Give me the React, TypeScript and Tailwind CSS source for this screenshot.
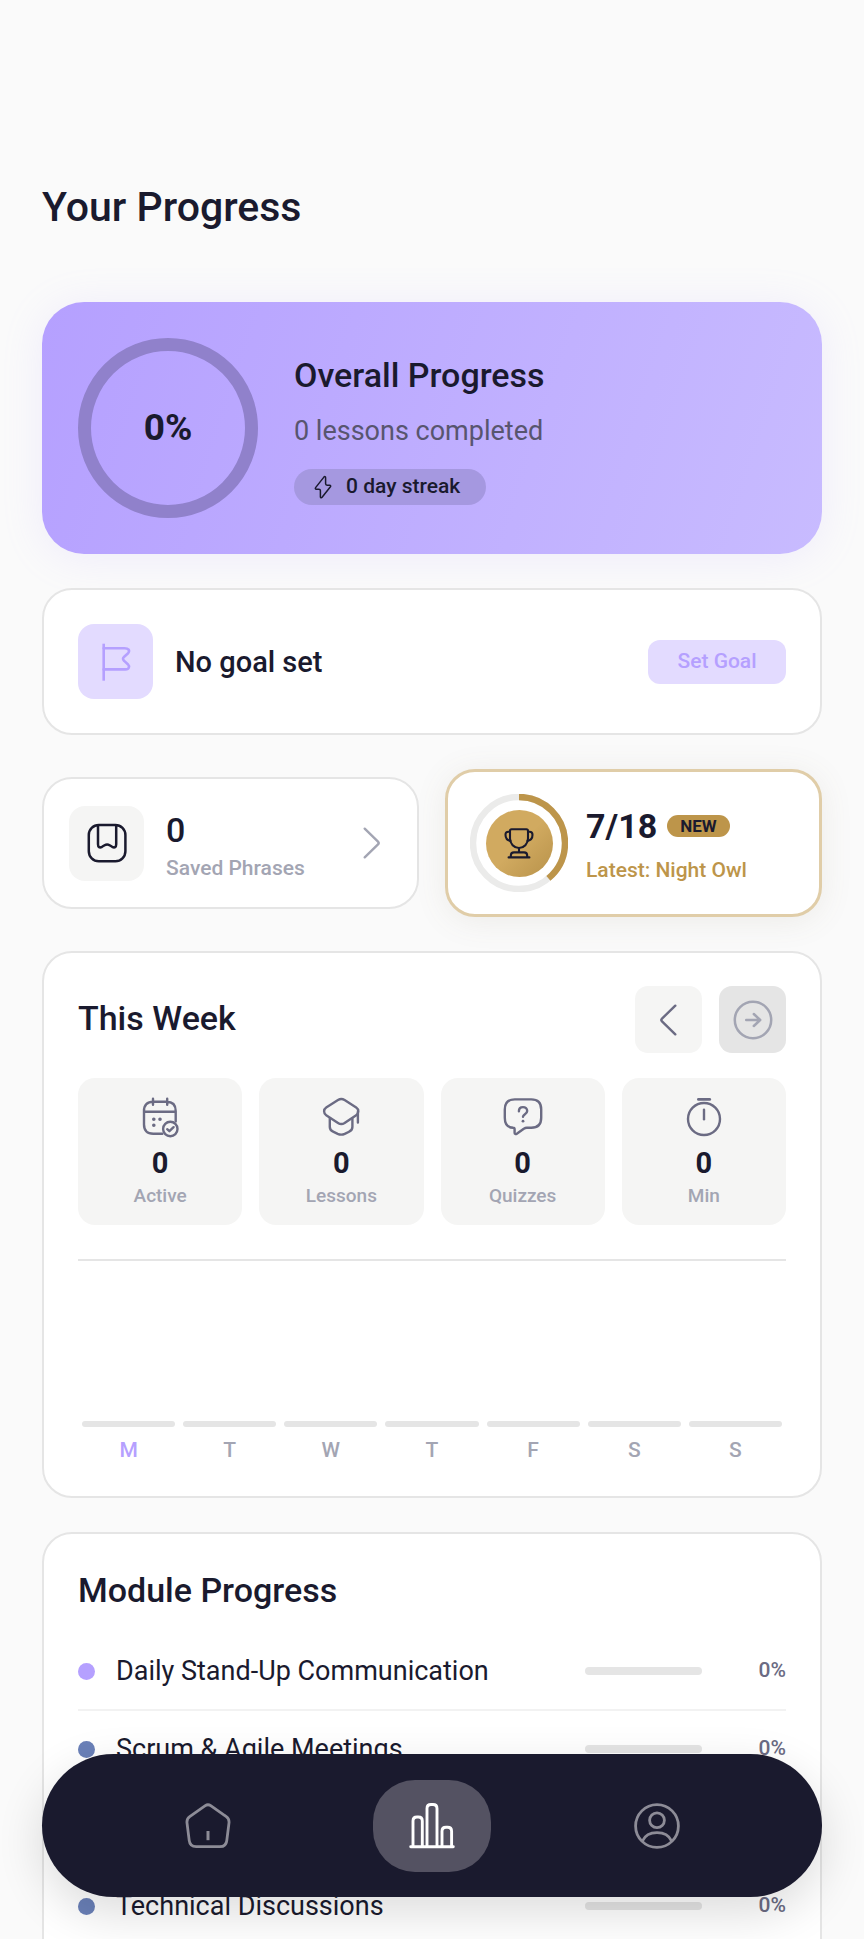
import type { ReactNode } from "react"
import { clsx } from "clsx"

type IconProps = {
  className?: string
  strokeWidth?: number
  box?: number
  children?: ReactNode
}

function Icon({ className, strokeWidth = 2.4, box = 42, children }: IconProps) {
  return (
    <svg
      viewBox={`0 0 ${box} ${box}`}
      fill="none"
      stroke="currentColor"
      strokeWidth={strokeWidth}
      strokeLinecap="round"
      strokeLinejoin="round"
      aria-hidden="true"
      className={clsx("shrink-0", className)}
    >
      {children}
    </svg>
  )
}

const BoltIcon = () => (
  <Icon box={26} strokeWidth={1.5} className="size-[26px]">
    <path d="M13.9 3.1 5.6 13.6c-.6.8-.2 1.6.7 1.6h2.6c.9 0 1.5.5 1.5 1.4v6.1c0 1.2 1 1.4 1.7.6l8.3-10.5c.6-.8.2-1.6-.7-1.6h-2.6c-.9 0-1.5-.5-1.5-1.4V3.7c0-1.2-1-1.4-1.7-.6Z" />
  </Icon>
)

const FlagIcon = () => (
  <Icon className="size-[42px]" strokeWidth={2.6}>
    <path strokeLinecap="butt" d="M8.7 2.7v37" />
    <path d="M8.7 7.2h20.8c4 0 5.8 2.2 3.6 5l-3.9 3.5c-1.6 1.4-1.6 2.8 0 4.2l3.6 3.3c2.2 2.2 1.3 5.2-2.3 5.2H8.7" />
  </Icon>
)

const BookmarkIcon = () => (
  <Icon className="size-[42px]" strokeWidth={2.5}>
    <rect x="2.8" y="3" width="36.6" height="36.2" rx="10" />
    <path d="M12 3.4v18.8c0 3 1.6 4 4 2.6l2.6-1.6c1.6-1 3.4-1 5 0l2.6 1.6c2.4 1.4 4 .4 4-2.6V3.4" />
  </Icon>
)

const ChevronIcon = ({ left }: { left?: boolean }) => (
  <Icon className="size-[42px]" strokeWidth={2.4}>
    {left ? (
      <path d="M27.3 6.7 14 19.6c-.9.9-.9 1.9 0 2.8l13.3 12.9" />
    ) : (
      <path d="m14.7 6.7 13.3 12.9c.9.9.9 1.9 0 2.8L14.7 35.3" />
    )}
  </Icon>
)

const ArrowCircleIcon = () => (
  <Icon className="size-[42px]" strokeWidth={2.5}>
    <circle cx="21" cy="21" r="18.2" />
    <path d="M14.2 21h14M21.8 15l6.4 6-6.4 6" />
  </Icon>
)

const TrophyIcon = () => (
  <Icon className="size-[42px]" strokeWidth={2.1}>
    <path d="M13.6 7.2h14.8c1 0 1.6.8 1.6 1.8v7.6c0 5-4 9.4-9 9.4s-9-4.4-9-9.4V9c0-1 .6-1.8 1.6-1.8Z" />
    <path d="M12 9.8h-1.6c-2 0-2.900 1-2.900 3 0 3.400 1.800 5.600 5 6.200M30 9.800h1.600c2 0 2.900 1 2.900 3 0 3.400-1.800 5.600-5 6.200M21 26v4.400M10.600 35.400h20.800M12.800 35.400v-1.600c0-2 1.200-3.400 3.200-3.400h10c2 0 3.200 1.400 3.200 3.400v1.600" />
  </Icon>
)

const CalendarIcon = () => (
  <Icon className="size-[42px]">
    <path d="M23.4 37.7H14.2c-6 0-9.2-3.2-9.2-9.2V15c0-6 3.2-9.2 9.2-9.2h13.3c6 0 9.2 3.2 9.2 9.2v10.4M5 15.7h31.7M14 2.7v6M28.2 2.7v6" />
    <circle cx="31.3" cy="33" r="7.2" />
    <path d="m28.2 33.2 2.2 2 4.2-4" />
    <path strokeWidth={3.6} d="M14.8 23.3h.01M21 23.3h.01M14.8 29.3h.01" />
  </Icon>
)

const CapIcon = () => (
  <Icon className="size-[42px]">
    <path d="M18 4 6.2 11.4c-2.8 1.8-2.8 6 0 7.8L18 27c2.2 1.4 4.4 1.4 6.6 0l11.6-7.8c2.8-1.8 2.8-6 0-7.8L24.6 4C22.4 2.6 20.2 2.6 18 4Z" />
    <path d="M9.800 22.600v8.400c0 2.600.9 3.600 3.300 4.700l4.600 2.200c2.300 1 4.700 1 7 0l4.400-2.200c2.400-1.100 3.300-2.100 3.300-4.700v-8.400M37.900 15.600v11" />
  </Icon>
)

const QuizIcon = () => (
  <Icon className="size-[42px]">
    <path d="M12.8 3.4h16.4c6.400 0 10 3.600 10 10v8.400c0 6.400-3.600 10-10 10h-4.400c-1.200 0-2 .3-3 .9l-7 5c-1.200.8-2.200.4-2.200-1v-3.400c0-1-.4-1.500-1.400-1.500C6 31.600 2.800 28 2.800 21.800v-8.400c0-6.400 3.600-10 10-10Z" />
    <path d="M16.900 15.200c0-2.600 1.700-4.100 4.100-4.100s4.200 1.600 4.200 3.900c0 3.200-4.200 3.200-4.200 5.800" />
    <path strokeWidth={2.8} d="M21 25.200h.01" />
  </Icon>
)

const TimerIcon = () => (
  <Icon className="size-[42px]">
    <circle cx="21" cy="23" r="16" />
    <path d="M15.400 3.400h11.300" strokeWidth={2.8} />
    <path d="M21 13.800v9.400" />
  </Icon>
)

const HomeIcon = () => (
  <Icon box={48} className="size-12" strokeWidth={2.8}>
    <path d="M21.3 3.700 5.700 14.700c-2.200 1.600-3 3.400-2.700 6.100l2.200 17.600c.5 4.400 2.600 6.300 7 6.300h23.600c4.400 0 6.500-1.900 7-6.300L45 20.800c.3-2.700-.5-4.500-2.700-6.100L26.700 3.700c-1.900-1.300-3.500-1.300-5.400 0Z" />
    <path strokeLinecap="butt" strokeWidth={3} d="M24 29v9.200" />
  </Icon>
)

const ChartIcon = () => (
  <Icon box={48} className="size-12" strokeWidth={2.9}>
    <path d="M2.700 44.700h42.600M5 44.700V19c0-2.700 1.300-4 4-4h1.300c2.700 0 4 1.300 4 4v25.700M19 44.700V6.500c0-2.700 1.300-4 4-4h2c2.700 0 4 1.300 4 4v38.200M34 44.700V29.200c0-2.700 1.300-4 4-4h1.600c2.700 0 4 1.300 4 4v15.500" />
  </Icon>
)

const ProfileIcon = () => (
  <Icon box={48} className="size-12" strokeWidth={2.8}>
    <circle cx="24" cy="24" r="21.4" />
    <circle cx="24" cy="18.3" r="7.4" />
    <path d="M9.600 38.800C12 33.300 17.400 30.600 24 30.600s12 2.700 14.400 8.200" />
  </Icon>
)

const stats = [
  { label: "Active", value: 0, icon: <CalendarIcon /> },
  { label: "Lessons", value: 0, icon: <CapIcon /> },
  { label: "Quizzes", value: 0, icon: <QuizIcon /> },
  { label: "Min", value: 0, icon: <TimerIcon /> },
]

const days = ["M", "T", "W", "T", "F", "S", "S"]

const modules = [
  { name: "Daily Stand-Up Communication", dot: "bg-[#b5a0ff]", progress: 0 },
  { name: "Scrum & Agile Meetings", dot: "bg-[#6a80b8]", progress: 0 },
  { name: "Code Reviews", dot: "bg-[#6a80b8]", progress: 0 },
  { name: "Technical Discussions", dot: "bg-[#6a80b8]", progress: 0 },
]

const tabs = [
  { label: "Home", icon: <HomeIcon /> },
  { label: "Progress", icon: <ChartIcon />, active: true },
  { label: "Profile", icon: <ProfileIcon /> },
]

const cardClass = "rounded-[30px] border-2 border-[#e5e5e5] bg-white"

function OverallCard() {
  return (
    <section className="flex items-center gap-9 rounded-[42px] bg-linear-[108deg] from-[#b5a0ff] to-[#c8bbff] p-9 shadow-[0_4px_40px_rgba(181,160,255,0.16)]">
      <div className="grid size-[180px] shrink-0 place-items-center rounded-full border-[13px] border-[#9081cb]">
        <span className="text-[37px] leading-10 font-bold text-[#1a1a2e]">0%</span>
      </div>
      <div className="flex flex-col items-start pt-0.5">
        <h2 className="text-[34px] leading-[44px] font-medium text-[#1a1a2e]">Overall Progress</h2>
        <p className="mt-3.5 text-[27px] leading-10 text-[#58556f]">0 lessons completed</p>
        <span className="mt-[18px] inline-flex h-9 items-center gap-2.5 rounded-full bg-[#a598e0] pr-[26px] pl-4 text-[21px] font-medium text-[#1a1a2e]">
          <BoltIcon />
          0 day streak
        </span>
      </div>
    </section>
  )
}

function GoalCard() {
  return (
    <section className={clsx(cardClass, "mt-[34px] flex items-center p-[34px]")}>
      <div className="grid size-[75px] place-items-center rounded-2xl bg-[#e3dbff] text-[#b5a0ff]">
        <FlagIcon />
      </div>
      <h2 className="ml-[22px] text-[29px] leading-9 font-medium text-[#1a1a2e]">No goal set</h2>
      <button
        type="button"
        className="ml-auto h-11 w-[138px] rounded-xl bg-[#e3dbff] text-[21px] font-medium text-[#b5a0ff]"
      >
        Set Goal
      </button>
    </section>
  )
}

function SavedPhrases() {
  return (
    <button type="button" className={clsx(cardClass, "flex items-center p-[25px] text-left")}>
      <span className="grid size-[75px] shrink-0 place-items-center rounded-2xl bg-[#f5f5f4] text-[#1a1a2e]">
        <BookmarkIcon />
      </span>
      <span className="ml-[22px] flex flex-1 flex-col pt-[5px]">
        <span className="text-[34px] leading-[42px] font-medium text-[#1a1a2e]">0</span>
        <span className="mt-[3px] text-[21px] leading-7 font-medium text-[#a3a5b3]">Saved Phrases</span>
      </span>
      <span className="text-[#a3a5b3]">
        <ChevronIcon />
      </span>
    </button>
  )
}

function Achievements({ earned, total }: { earned: number; total: number }) {
  const radius = 46
  const length = 2 * Math.PI * radius
  return (
    <button
      type="button"
      className="flex items-center rounded-[30px] border-3 border-[#e0cda8] bg-white px-[22px] py-[22px] text-left shadow-[0_4px_32px_rgba(120,110,74,0.1)]"
    >
      <span className="relative grid size-[98px] shrink-0 place-items-center">
        <svg viewBox="0 0 98 98" fill="none" strokeWidth="6.4" className="absolute inset-0 -rotate-90" aria-hidden="true">
          <circle cx="49" cy="49" r={radius} stroke="#ebebea" />
          <circle
            cx="49"
            cy="49"
            r={radius}
            stroke="#bd954a"
            strokeDasharray={`${(earned / total) * length} ${length}`}
          />
        </svg>
        <span className="grid size-[67px] place-items-center rounded-full bg-linear-to-br from-[#d1aa60] from-50% to-[#b8924a] text-[#1a1a2e]">
          <TrophyIcon />
        </span>
      </span>
      <span className="ml-[18px] flex flex-col pt-1">
        <span className="flex items-center gap-2.5">
          <span className="text-[34px] leading-[44px] font-bold text-[#1a1a2e]">
            {earned}/{total}
          </span>
          <span className="rounded-full bg-[#bd954a] px-[13px] text-[17px] leading-[22px] font-bold text-[#1a1a2e]">NEW</span>
        </span>
        <span className="mt-1.5 text-[21px] leading-8 font-medium text-[#bd954a]">Latest: Night Owl</span>
      </span>
    </button>
  )
}

function WeekCard() {
  return (
    <section className={clsx(cardClass, "mt-[34px] px-[34px] pt-[33px] pb-[31px]")}>
      <div className="flex items-center">
        <h2 className="mr-auto pb-[3px] text-[34px] leading-[44px] font-medium text-[#1a1a2e]">This Week</h2>
        <button
          type="button"
          aria-label="Previous week"
          className="grid size-[67px] place-items-center rounded-[13px] bg-[#f5f5f4] text-[#6b6b83]"
        >
          <ChevronIcon left />
        </button>
        <button
          type="button"
          aria-label="Next week"
          disabled
          className="ml-[17px] grid size-[67px] place-items-center rounded-[13px] bg-[#e5e5e5] text-[#a3a5b3]"
        >
          <ArrowCircleIcon />
        </button>
      </div>

      <div className="mt-[25px] grid grid-cols-4 gap-[17px]">
        {stats.map((stat) => (
          <div key={stat.label} className="flex h-[147px] flex-col items-center rounded-[17px] bg-[#f5f5f4] pt-[18px] text-[#6b6b83]">
            {stat.icon}
            <span className="mt-1.5 text-[29px] leading-[38px] font-bold text-[#1a1a2e]">{stat.value}</span>
            <span className="text-[19px] leading-7 font-medium text-[#a3a5b3]">{stat.label}</span>
          </div>
        ))}
      </div>

      {/* Daily minutes */}
      <div className="mt-[34px] flex gap-2 border-t-2 border-[#e5e5e5] px-1 pt-[160px]">
        {days.map((day, i) => (
          <div key={i} className="flex flex-1 flex-col items-center gap-2">
            <div className="h-1.5 w-full rounded-full bg-[#e5e5e5]" />
            <span className={clsx("text-[21px] leading-[30px] font-medium", i === 0 ? "text-[#b5a0ff]" : "text-[#a3a5b3]")}>
              {day}
            </span>
          </div>
        ))}
      </div>
    </section>
  )
}

function ModuleCard() {
  return (
    <section className={clsx(cardClass, "mt-[34px] p-[34px]")}>
      <h2 className="text-[34px] leading-[44px] font-medium text-[#1a1a2e]">Module Progress</h2>
      <ul className="mt-[21px]">
        {modules.map((item) => (
          <li key={item.name} className="flex h-[78px] items-center border-b-2 border-[#f2f2f2] last:border-b-0">
            <span className={clsx("size-[17px] shrink-0 rounded-full", item.dot)} />
            <span className="ml-[21px] flex-1 truncate text-[27px] leading-9 text-[#1a1a2e]">{item.name}</span>
            <span className="h-2 w-[117px] overflow-hidden rounded-full bg-[#e5e5e5]">
              <span className={clsx("block h-full", item.dot)} style={{ width: `${item.progress}%` }} />
            </span>
            <span className="w-[84px] text-right text-[21px] font-medium text-[#6b6b83]">{item.progress}%</span>
          </li>
        ))}
      </ul>
    </section>
  )
}

function TabBar() {
  return (
    <nav className="fixed inset-x-[42px] bottom-[42px] flex h-[143px] items-center justify-evenly rounded-full bg-[#1a1a2e] shadow-[0_16px_48px_rgba(0,0,0,0.14)]">
      {tabs.map((tab) => (
        <a
          key={tab.label}
          href="#"
          aria-label={tab.label}
          className={clsx(
            "grid h-[92px] w-[118px] place-items-center rounded-[42px]",
            tab.active ? "bg-[#545262] text-white" : "text-[#8d8c97]"
          )}
        >
          {tab.icon}
        </a>
      ))}
    </nav>
  )
}

export default function App() {
  return (
    <div className="h-screen overflow-y-auto bg-[#fafafa] font-[Roboto,sans-serif] [scrollbar-width:none]">
      <main className="px-[42px] pt-[183px] pb-[226px]">
        <h1 className="text-[41px] leading-[48px] font-medium text-[#1a1a2e]">Your Progress</h1>
        <div className="mt-[71px]">
          <OverallCard />
          <GoalCard />
          <div className="mt-[34px] grid grid-cols-2 items-center gap-[26px]">
            <SavedPhrases />
            <Achievements earned={7} total={18} />
          </div>
          <WeekCard />
          <ModuleCard />
        </div>
      </main>
      <TabBar />
    </div>
  )
}
